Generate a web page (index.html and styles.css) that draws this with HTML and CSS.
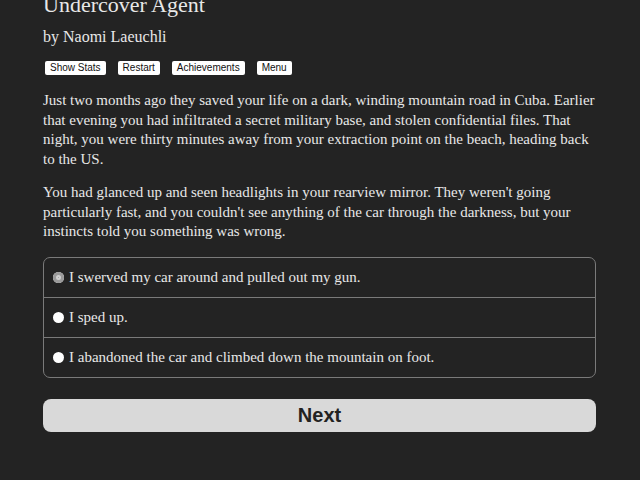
FILE: index.html
```html
<!DOCTYPE html>
<html lang="en">
<head>
    <meta charset="UTF-8">
    <title>Undercover Agent</title>
    <link rel="stylesheet" href="styles.css">
</head>
<body>
    <div class="container">
        <h1 class="title">Undercover Agent</h1>
        <h2 class="author">by Naomi Laeuchli</h2>
        <div class="buttons">
            <button class="spacedLink">Show Stats</button>
            <button class="spacedLink">Restart</button>
            <button class="spacedLink">Achievements</button>
            <button class="spacedLink">Menu</button>
        </div>
        <div class="text">
            <p>Just two months ago they saved your life on a dark, winding mountain road in Cuba. Earlier that evening you had infiltrated a secret military base, and stolen confidential files. That night, you were thirty minutes away from your extraction point on the beach, heading back to the US.</p>
            <p>You had glanced up and seen headlights in your rearview mirror. They weren't going particularly fast, and you couldn't see anything of the car through the darkness, but your instincts told you something was wrong.</p>
        </div>
        <form class="choices">
            <label class="choice"><input type="radio" name="choice" checked> I swerved my car around and pulled out my gun.</label>
            <label class="choice"><input type="radio" name="choice"> I sped up.</label>
            <label class="choice"><input type="radio" name="choice"> I abandoned the car and climbed down the mountain on foot.</label>
        </form>
        <button class="next">Next</button>
    </div>
</body>
</html>
```

FILE: styles.css
```css
body {
    margin: 0;
    background: #232323;
    color: #e8e8e8;
    font-family: "Liberation Serif", serif;
}

.container {
    width: 553px;
    margin: -8px 0 0 43px;
}

.title {
    font-size: 22px;
    font-weight: normal;
    margin: 0;
    line-height: 26px;
}

.author {
    font-size: 16px;
    font-weight: normal;
    margin: 9px 0 0;
    line-height: 20px;
}

.buttons {
    display: flex;
    gap: 12px;
    margin: 14px 0 0 2px;
}

.spacedLink {
    font-family: "Liberation Sans", sans-serif;
    font-size: 10px;
    padding: 0 5px;
    height: 14px;
    line-height: 14px;
    background: #fff;
    color: #111;
    border: none;
    border-radius: 2px;
}

.text {
    margin-top: 16px;
    font-size: 15px;
    line-height: 19.5px;
}

.text p {
    margin: 0 0 14px;
}

.choices {
    margin-top: 15px;
    border: 1px solid #7a7a7a;
    border-radius: 7px;
}

.choice {
    display: flex;
    align-items: center;
    height: 39px;
    padding: 0 9px;
    font-size: 15px;
    border-top: 1px solid #7a7a7a;
}

.choice:first-child {
    border-top: none;
}

.choice input {
    appearance: none;
    width: 11px;
    height: 11px;
    margin: 0 5px 0 0;
    border-radius: 50%;
    background: #fff;
}

.choice input:checked {
    background: #9a9a9a;
    box-shadow: inset 0 0 0 3px #9a9a9a, inset 0 0 0 5px #d0d0d0;
}

.next {
    display: block;
    width: 100%;
    height: 33px;
    margin-top: 21px;
    background: #d9d9d9;
    color: #222;
    border: none;
    border-radius: 8px;
    font-family: "Liberation Sans", sans-serif;
    font-weight: bold;
    font-size: 20px;
}
```
